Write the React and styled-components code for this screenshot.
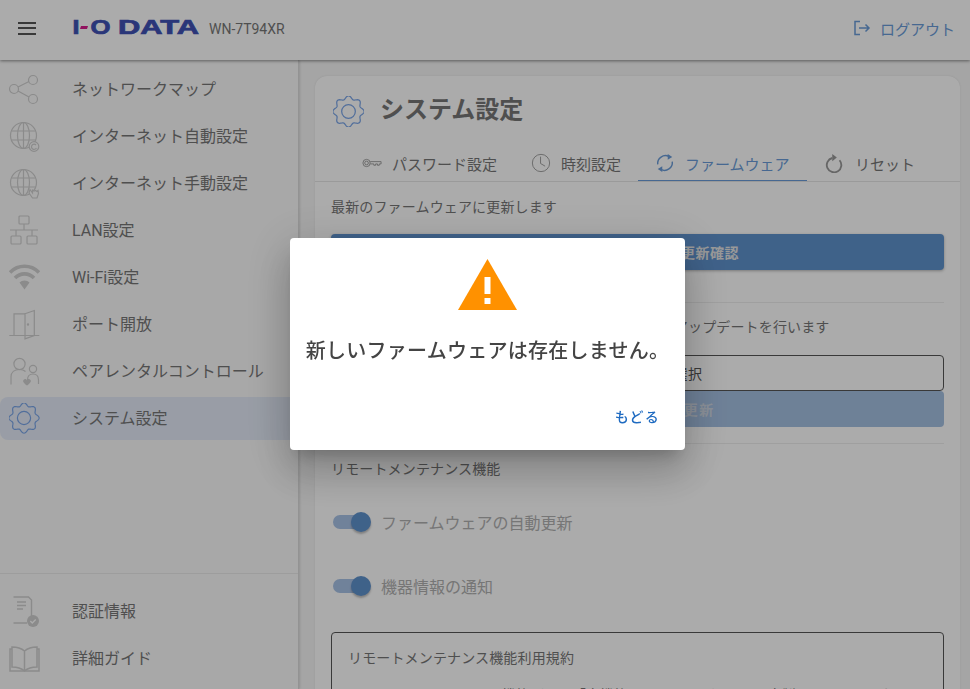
import React from 'react'
import styled, { createGlobalStyle } from 'styled-components'

const GlobalStyle = createGlobalStyle`
    html, body {
        margin: 0;
        padding: 0;
        height: 100%;
        overflow: hidden;
    }
    body {
        font-family: Roboto, "Noto Sans CJK JP", sans-serif;
        color: #555;
        background: #f6f6f6;
    }
`

// wavy outline used by the gear icons
const gearPath = (cx, cy, r, amp) => {
    const pts = []
    for (let i = 0; i <= 144; i++) {
        const a = (i / 144) * Math.PI * 2
        const rad = r + amp * Math.cos(a * 8)
        pts.push(`${(cx + rad * Math.sin(a)).toFixed(2)} ${(cy - rad * Math.cos(a)).toFixed(2)}`)
    }
    return `M${pts.join('L')}Z`
}

const Gear = () => (
    <>
        <path d={gearPath(15, 15, 13.6, 1.5)} />
        <circle cx="15" cy="15" r="6.6" />
    </>
)

const Globe = () => (
    <>
        <circle cx="14.5" cy="14.5" r="13" />
        <ellipse cx="14.5" cy="14.5" rx="6" ry="13" />
        <path d="M14.5 1.5v26M2.5 10h24M2.5 19h24" />
    </>
)

const icons = {
    map: (
        <>
            <circle cx="5" cy="15" r="4.5" />
            <circle cx="24" cy="6" r="4.5" />
            <circle cx="24" cy="25" r="4.5" />
            <path d="M9 13l11-5.5M9 17l11 6" />
        </>
    ),
    auto: (
        <>
            <Globe />
            <circle cx="25" cy="25.5" r="4.8" fill="#fbfbfb" />
            <path d="M27 24a2.6 2.6 0 1 0 .4 2.9" />
        </>
    ),
    manual: (
        <>
            <Globe />
            <path d="M21 21.500l2.500 3.500v-3l1.500 1 1.500-.5 1.500 1 1-1 .5 3-1.500 4.500h-4.500l-3.500-5z" fill="#fbfbfb" />
        </>
    ),
    lan: (
        <>
            <rect x="10" y="1" width="10" height="8" rx="1" />
            <rect x="2" y="21" width="10" height="8" rx="1" />
            <rect x="18" y="21" width="10" height="8" rx="1" />
            <path d="M15 9v6M1 15h28M7 15v6M23 15v6" />
        </>
    ),
    wifi: (
        <g strokeWidth="3.6">
            <path d="M1 10.500a20 20 0 0 1 29 0" />
            <path d="M6 16a13 13 0 0 1 19 0" />
            <path d="M10.500 20.500a7 7 0 0 1 10 0L15.500 27.500z" fill="#cfcfcf" stroke="none" />
        </g>
    ),
    port: (
        <>
            <path d="M.3 26.500h30M5 26.500V4.800h11" />
            <path d="M16 4.800l9.300-3.300v25l-9.300 3.300z" />
            <circle cx="19" cy="15.500" r=".6" />
        </>
    ),
    parental: (
        <>
            <circle cx="10.500" cy="8" r="5.600" />
            <path d="M2 28.500V21c0-5 3.500-7.500 8.500-7.500 2.500 0 4.500.6 6 2" />
            <circle cx="24" cy="13" r="3.600" />
            <path d="M18.500 24c0-3.500 2-6 5.500-6s5.500 2.500 5.500 6v4" />
            <path d="M14.500 24c1.400-1.600 3-.8 3.500.4.500-1.200 2.100-2 3.500-.4 1 1.300 0 3-3.500 5.600-3.500-2.600-4.500-4.300-3.500-5.600z" fill="#cfcfcf" stroke="none" />
        </>
    ),
    system: <Gear />,
    cert: (
        <>
            <path d="M4.500 1h15l3 3v16M18 27H4.500z" strokeWidth="1.400" />
            <path d="M8 6h9M8 9.500h9M8 13h6" strokeWidth="1.400" />
            <circle cx="24" cy="25" r="6" fill="#cfcfcf" stroke="none" />
            <path d="M21.300 25l2 2 3.400-3.500" stroke="#fff" strokeWidth="1.400" />
        </>
    ),
    guide: (
        <g strokeWidth="1.500">
            <path d="M15.500 8C12 5 7 4 3 4v20c4 0 9 1 12.500 4 3.500-3 8.500-4 12.500-4V4c-4 0-9 1-12.500 4zM15.500 8v20" />
            <path d="M3 6H1v22h29V6h-2" />
        </g>
    ),
}

const navItems = [
    { key: 'map', label: 'ネットワークマップ' },
    { key: 'auto', label: 'インターネット自動設定' },
    { key: 'manual', label: 'インターネット手動設定' },
    { key: 'lan', label: 'LAN設定' },
    { key: 'wifi', label: 'Wi-Fi設定' },
    { key: 'port', label: 'ポート開放' },
    { key: 'parental', label: 'ペアレンタルコントロール' },
    { key: 'system', label: 'システム設定', active: true },
]

const footItems = [
    { key: 'cert', label: '認証情報' },
    { key: 'guide', label: '詳細ガイド' },
]

const App = () => (
    <Page>
        <GlobalStyle />
        <Header>
            <Burger aria-label="menu">
                <span /><span /><span />
            </Burger>
            <LogoMark width="128" height="18" viewBox="0 0 128 18">
                <g fill="#3f51b5" stroke="#3f51b5" strokeWidth="0.7" fontFamily="'Liberation Sans', sans-serif" fontWeight="700" fontSize="19.5">
                    <text x="0.6" y="15" textLength="7" lengthAdjust="spacingAndGlyphs">I</text>
                    <text x="18.500" y="15" textLength="20" lengthAdjust="spacingAndGlyphs">O</text>
                    <text x="46" y="15" textLength="81" lengthAdjust="spacingAndGlyphs">DATA</text>
                </g>
                <path d="M9 7h7l-1 3h-7z" fill="#d81b8c" />
            </LogoMark>
            <Model>WN-7T94XR</Model>
            <Logout>
                <svg width="18" height="18" viewBox="0 0 18 18" fill="none" stroke="currentColor" strokeWidth="1.500">
                    <path d="M7 2.500H2v13h5M6 9h10M12.500 5.500L16 9l-3.500 3.500" />
                </svg>
                ログアウト
            </Logout>
        </Header>
        <Body>
            <Sidebar>
                <nav>
                    {navItems.map(item => (
                        <NavRow key={item.key} $active={item.active}>
                            <NavIcon viewBox="0 0 31 31" $active={item.active}>{icons[item.key]}</NavIcon>
                            <NavLabel>{item.label}</NavLabel>
                        </NavRow>
                    ))}
                </nav>
                <SideFoot>
                    {footItems.map(item => (
                        <NavRow key={item.key}>
                            <NavIcon viewBox="0 0 31 31">{icons[item.key]}</NavIcon>
                            <NavLabel>{item.label}</NavLabel>
                        </NavRow>
                    ))}
                </SideFoot>
            </Sidebar>
            <Main>
                <Card>
                    <CardHead>
                        <NavIcon viewBox="0 0 30 30" $active><Gear /></NavIcon>
                        <Title>システム設定</Title>
                    </CardHead>
                    <Tabs>
                        <Tab>
                            <TabIcon viewBox="0 0 22 22">
                                <circle cx="5" cy="11" r="4" />
                                <circle cx="5" cy="11" r="2" />
                                <path d="M9 9.500h12v2.500h-2v1.500h-2V12h-2v1.500h-2V12H9" />
                            </TabIcon>
                            パスワード設定
                        </Tab>
                        <Tab>
                            <TabIcon viewBox="0 0 22 22">
                                <circle cx="11" cy="11" r="9.500" />
                                <path d="M10.500 4v7.500l5 3" />
                            </TabIcon>
                            時刻設定
                        </Tab>
                        <Tab $active>
                            <TabIcon viewBox="0 0 22 22" $active>
                                <g strokeWidth="1.600">
                                    <path d="M3 12.500A8.500 8.500 0 0 1 15.500 4" />
                                    <path d="M19 9.500A8.500 8.500 0 0 1 6.500 18" />
                                </g>
                                <path d="M14 1l5 3.500-5 3zM8 21l-5-3.500 5-3z" fill="currentColor" stroke="none" />
                            </TabIcon>
                            ファームウェア
                        </Tab>
                        <Tab>
                            <TabIcon viewBox="0 0 22 22">
                                <path d="M8 4.500A8 8 0 1 0 16 7" strokeWidth="2" transform="translate(0 1)" />
                                <path d="M8 1l5 4-5 4z" fill="currentColor" stroke="none" />
                            </TabIcon>
                            リセット
                        </Tab>
                    </Tabs>
                    <Content>
                        <Para>最新のファームウェアに更新します</Para>
                        <PrimaryButton>最新ファームウェアの更新確認</PrimaryButton>
                        <Divider />
                        <Para>PC内に保存したファイルを使用してファームウェアのアップデートを行います</Para>
                        <FileButton>更新ファイルを選択</FileButton>
                        <PrimaryButton $disabled>ファームウェアを更新</PrimaryButton>
                        <Divider $tight />
                        <Para>リモートメンテナンス機能</Para>
                        <ToggleList>
                            <ToggleRow>
                                <Toggle><Thumb /></Toggle>
                                ファームウェアの自動更新
                            </ToggleRow>
                            <ToggleRow>
                                <Toggle><Thumb /></Toggle>
                                機器情報の通知
                            </ToggleRow>
                        </ToggleList>
                        <TermsBox>
                            <Para>リモートメンテナンス機能利用規約</Para>
                            <TermsText>リモートメンテナンス機能（以下「本機能」といいます）とは、本製品のファームウェアを自動で更新する機能です。</TermsText>
                        </TermsBox>
                    </Content>
                </Card>
            </Main>
        </Body>
        <Backdrop>
            <Dialog role="dialog">
                <svg width="59" height="51" viewBox="0 0 59 51">
                    <path d="M29.500 0L59 51H0z" fill="#ff9100" />
                    <path d="M26.500 18h6v17h-6zM26.500 39h6v6h-6z" fill="#fff" />
                </svg>
                <Message>新しいファームウェアは存在しません。</Message>
                <DialogActions>
                    <BackButton>もどる</BackButton>
                </DialogActions>
            </Dialog>
        </Backdrop>
    </Page>
)

const Page = styled.div`
    width: 970px;
    height: 689px;
    overflow: hidden;
    display: flex;
    flex-direction: column;
`

const Header = styled.header`
    height: 60px;
    flex: none;
    display: flex;
    align-items: center;
    padding: 0 15px 4px 18px;
    box-sizing: border-box;
    background: #fff;
    box-shadow: 0 1px 3px rgba(0, 0, 0, 0.45);
    position: relative;
    z-index: 2;
`

const Burger = styled.div`
    width: 18px;
    display: flex;
    flex-direction: column;
    gap: 3.5px;
    margin-right: 36px;
    span {
        height: 2px;
        background: #555;
    }
`

const LogoMark = styled.svg`
    overflow: visible;
    margin-bottom: 1px;
`

const Model = styled.span`
    margin: 2px 0 0 9px;
    font-size: 14px;
    color: #777;
`

const Logout = styled.div`
    margin-left: auto;
    display: flex;
    align-items: center;
    gap: 9px;
    font-size: 15px;
    color: #6a9cd8;
`

const Body = styled.div`
    flex: 1;
    display: flex;
    min-height: 0;
`

const Sidebar = styled.aside`
    width: 299px;
    flex: none;
    box-sizing: border-box;
    padding-top: 8px;
    display: flex;
    flex-direction: column;
    justify-content: space-between;
    background: #fbfbfb;
    border-right: 1px solid #dcdcdc;
    box-shadow: 1px 0 2px rgba(0, 0, 0, 0.12);
    nav {
        display: flex;
        flex-direction: column;
        gap: 4px;
    }
`

const SideFoot = styled.div`
    display: flex;
    flex-direction: column;
    gap: 4px;
    padding: 16px 0 9px;
    border-top: 1px solid #eaeaea;
`

const NavRow = styled.div`
    height: 43px;
    display: flex;
    align-items: center;
    gap: 32px;
    padding-left: 9px;
    border-radius: 8px 0 0 8px;
    background: ${props => (props.$active ? '#e4ebf8' : 'transparent')};
`

const NavLabel = styled.span`
    margin-bottom: 3px;
    font-size: 16px;
    color: #777;
`

const NavIcon = styled.svg`
    width: 31px;
    height: 31px;
    flex: none;
    fill: none;
    stroke-width: 1.2;
    stroke: ${props => (props.$active ? '#7aa5e8' : '#cfcfcf')};
`

const Main = styled.main`
    flex: 1;
    min-width: 0;
    padding: 16px 10px 0 16px;
`

const Card = styled.section`
    background: #fff;
    border-radius: 12px 12px 0 0;
    box-shadow: 0 0 2px rgba(0, 0, 0, 0.1);
    padding-top: 18px;
`

const CardHead = styled.div`
    display: flex;
    align-items: center;
    gap: 16px;
    padding-left: 18px;
    height: 34px;
`

const Title = styled.h1`
    margin: -8px 0 0;
    font-size: 24px;
    font-weight: 700;
    color: #777;
`

const Tabs = styled.div`
    display: flex;
    justify-content: center;
    margin-top: 20px;
    padding-left: 2px;
    height: 33px;
    border-bottom: 1px solid #e6e6e6;
`

const Tab = styled.div`
    display: flex;
    align-items: center;
    gap: 10px;
    padding: 0 17px 2px;
    height: 33px;
    box-sizing: border-box;
    font-size: 15px;
    color: ${props => (props.$active ? '#6a9cd8' : '#777')};
    border-bottom: 1px solid ${props => (props.$active ? '#6a9cd8' : 'transparent')};
    &:last-child {
        padding-left: 18.5px;
    }
`

const TabIcon = styled.svg`
    width: 20px;
    height: 20px;
    fill: none;
    stroke: currentColor;
    stroke-width: 1;
    opacity: ${props => (props.$active ? 1 : 0.75)};
`

const Content = styled.div`
    padding: 15px 16px 0;
`

const Para = styled.p`
    margin: 0;
    font-size: 14px;
    line-height: 21px;
    letter-spacing: 0.15px;
    color: #777;
`

const PrimaryButton = styled.div`
    height: 36px;
    margin-top: ${props => (props.$disabled ? '0' : '16px')};
    border-radius: 4px;
    display: flex;
    align-items: center;
    justify-content: center;
    font-size: 14px;
    font-weight: 700;
    letter-spacing: ${props => (props.$disabled ? '1.5px' : '0.55px')};
    color: ${props => (props.$disabled ? '#d0d8e4' : '#e4e4e4')};
    background: ${props => (props.$disabled ? '#a5c0e2' : '#5f92cd')};
    box-shadow: ${props => (props.$disabled ? 'none' : '0 1px 3px rgba(0, 0, 0, 0.3)')};
`

const Divider = styled.hr`
    margin: ${props => (props.$tight ? '16px 0 15px' : '32px 0 14px')};
    border: 0;
    border-top: 1px solid #eee;
    & + p {
        margin-bottom: ${props => (props.$tight ? '16px' : '17px')};
    }
`

const FileButton = styled.div`
    height: 36px;
    box-sizing: border-box;
    border: 1px solid #555;
    border-radius: 4px;
    display: flex;
    align-items: center;
    justify-content: center;
    font-size: 14px;
    letter-spacing: 0.4px;
    color: #555;
`

const ToggleList = styled.div`
    margin-top: -6px;
    display: flex;
    flex-direction: column;
`

const ToggleRow = styled.div`
    height: 64px;
    display: flex;
    align-items: center;
    gap: 14px;
    padding-left: 2px;
    font-size: 16px;
    color: #b0b0b0;
`

const Toggle = styled.div`
    width: 34px;
    height: 14px;
    border-radius: 7px;
    background: #a8c2e6;
    position: relative;
`

const Thumb = styled.div`
    position: absolute;
    top: -3px;
    right: -4px;
    width: 20px;
    height: 20px;
    border-radius: 50%;
    background: #5f92cd;
    box-shadow: 0 2px 2px rgba(0, 0, 0, 0.25);
`

const TermsBox = styled.div`
    margin-top: 14px;
    border: 1px solid #555;
    border-radius: 4px;
    padding: 15px 16px 20px;
`

const TermsText = styled.p`
    margin: 16px 0 0;
    font-size: 14px;
    line-height: 21px;
    text-indent: 14px;
    color: #777;
`

const Backdrop = styled.div`
    position: fixed;
    inset: 0;
    z-index: 10;
    background: rgba(0, 0, 0, 0.33);
    display: flex;
    align-items: center;
    justify-content: center;
`

const Dialog = styled.div`
    width: 395px;
    height: 212px;
    margin: 0 0 1px 5px;
    box-sizing: border-box;
    padding-top: 21px;
    display: flex;
    flex-direction: column;
    align-items: center;
    background: #fff;
    border-radius: 4px;
    box-shadow: 0 11px 15px -7px rgba(0, 0, 0, 0.2), 0 24px 38px 3px rgba(0, 0, 0, 0.14), 0 9px 46px 8px rgba(0, 0, 0, 0.12);
`

const Message = styled.div`
    margin-top: 26px;
    font-size: 20px;
    font-weight: 500;
    line-height: 30px;
    letter-spacing: 0.25px;
    color: #444;
`

const DialogActions = styled.div`
    margin-top: auto;
    align-self: stretch;
    display: flex;
    justify-content: flex-end;
    padding: 0 25px 23px 0;
`

const BackButton = styled.div`
    font-size: 14px;
    font-weight: 500;
    letter-spacing: 1.2px;
    line-height: 20px;
    color: #1f6bc1;
`

export default App
